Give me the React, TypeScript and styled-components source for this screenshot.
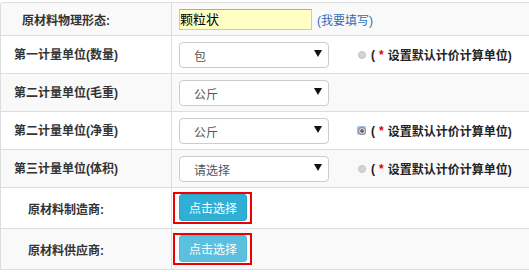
import React from 'react';
import styled, { createGlobalStyle } from 'styled-components';

const GlobalStyle = createGlobalStyle`
  body {
    margin: 0;
    background: #fff;
    font-family: "Liberation Sans", "Noto Sans CJK SC", sans-serif;
    font-size: 12px;
    color: #333;
  }
`;

const Table = styled.div`
  margin-top: 2px;
  border-top: 1px solid #ddd;
  border-left: 1px solid #ddd;
  border-top-left-radius: 4px;
  overflow: hidden;
`;

const Row = styled.div<{ $h: number; $striped: boolean }>`
  display: grid;
  grid-template-columns: 171px 1fr;
  height: ${({ $h }) => $h}px;
  box-sizing: border-box;
  border-bottom: 1px solid #ddd;
  background: ${({ $striped }) => ($striped ? '#f9f9f9' : '#fff')};
`;

const Label = styled.div<{ $lift?: boolean }>`
  display: flex;
  align-items: center;
  justify-content: center;
  padding-right: 40px;
  padding-bottom: ${({ $lift }) => ($lift ? '3px' : '0')};
  border-right: 1px solid #ddd;
  font-weight: bold;
  color: #333;
  white-space: nowrap;
`;

const Value = styled.div`
  display: flex;
  align-items: center;
  padding-left: 7px;
  white-space: nowrap;
`;

const TextInput = styled.div`
  box-sizing: border-box;
  width: 133px;
  height: 21px;
  border: 1px solid #c8c8c8;
  border-top-color: #aaa;
  background: #ffffc4;
  color: #000;
  font-size: 13px;
  line-height: 19px;
  padding-left: 0;
`;

const FillLink = styled.a`
  margin-left: 5px;
  color: #2e6fb6;
  font-size: 12px;
  text-decoration: none;
`;

const SelectBox = styled.div`
  box-sizing: border-box;
  width: 150px;
  height: 26px;
  border: 1px solid #ccc;
  border-radius: 4px;
  background: #fff;
  display: flex;
  align-items: center;
  justify-content: space-between;
  padding: 2px 6px 0 14px;
  color: #555;
  font-size: 12px;
`;

const Arrow = styled.svg`
  width: 8px;
  height: 7px;
  margin-bottom: 4px;
`;

const DefaultUnit = styled.label`
  display: flex;
  align-items: center;
  margin-left: 28px;
  font-weight: bold;
  color: #222;
`;

const Radio = styled.span<{ $checked?: boolean }>`
  width: 9px;
  height: 9px;
  border-radius: 2px;
  margin-right: 5px;
  display: flex;
  align-items: center;
  justify-content: center;
  background: ${({ $checked }) => ($checked ? '#9fbde8' : 'transparent')};
`;

const RadioDot = styled.span<{ $checked?: boolean }>`
  width: 8px;
  height: 8px;
  box-sizing: border-box;
  border-radius: 50%;
  background: ${({ $checked }) => ($checked ? 'radial-gradient(circle, #666 0 1.5px, #ddd 2px)' : '#d4d4d4')};
  border: 1px solid ${({ $checked }) => ($checked ? '#888' : '#c4c4c4')};
`;

const Star = styled.span`
  color: #e60000;
  margin: 0 4px;
`;

const Marker = styled.div`
  border: 2px solid #ee0000;
  background: #fff;
  padding: 0 3px 1px 4px;
  margin-left: -6px;
`;

const PickButton = styled.button<{ $active?: boolean }>`
  width: 68px;
  height: 27px;
  border-radius: 3px;
  border: 1px solid ${({ $active }) => ($active ? '#2aa3c8' : '#55b9d6')};
  background: ${({ $active }) => ($active ? '#2fafd5' : '#5bc0de')};
  color: #fff;
  font-family: inherit;
  font-size: 12px;
  padding: 0;
  cursor: pointer;
`;

type UnitRow = { label: string; value: string; radio?: 'on' | 'off' };

const units: UnitRow[] = [
  { label: '第一计量单位(数量)', value: '包', radio: 'off' },
  { label: '第二计量单位(毛重)', value: '公斤' },
  { label: '第二计量单位(净重)', value: '公斤', radio: 'on' },
  { label: '第三计量单位(体积)', value: '请选择', radio: 'off' },
];

const App: React.FC = () => {
  return (
    <>
      <GlobalStyle />
      <Table>
        <Row $h={33} $striped>
          <Label>原材料物理形态:</Label>
          <Value>
            <TextInput>颗粒状</TextInput>
            <FillLink href="#">(我要填写)</FillLink>
          </Value>
        </Row>
        {units.map((u, i) => (
          <Row key={u.label} $h={38} $striped={i % 2 === 1}>
            <Label $lift>{u.label}</Label>
            <Value>
              <SelectBox>
                <span>{u.value}</span>
                <Arrow viewBox="0 0 8 7">
                  <path d="M0 0 H8 L4 7 Z" fill="#111" />
                </Arrow>
              </SelectBox>
              {u.radio && (
                <DefaultUnit>
                  <Radio $checked={u.radio === 'on'}>
                    <RadioDot $checked={u.radio === 'on'} />
                  </Radio>
                  (<Star>*</Star>设置默认计价计算单位)
                </DefaultUnit>
              )}
            </Value>
          </Row>
        ))}
        <Row $h={41} $striped={false}>
          <Label>原材料制造商:</Label>
          <Value>
            <Marker>
              <PickButton $active>点击选择</PickButton>
            </Marker>
          </Value>
        </Row>
        <Row $h={41} $striped>
          <Label>原材料供应商:</Label>
          <Value>
            <Marker>
              <PickButton>点击选择</PickButton>
            </Marker>
          </Value>
        </Row>
      </Table>
    </>
  );
};

export default App;
